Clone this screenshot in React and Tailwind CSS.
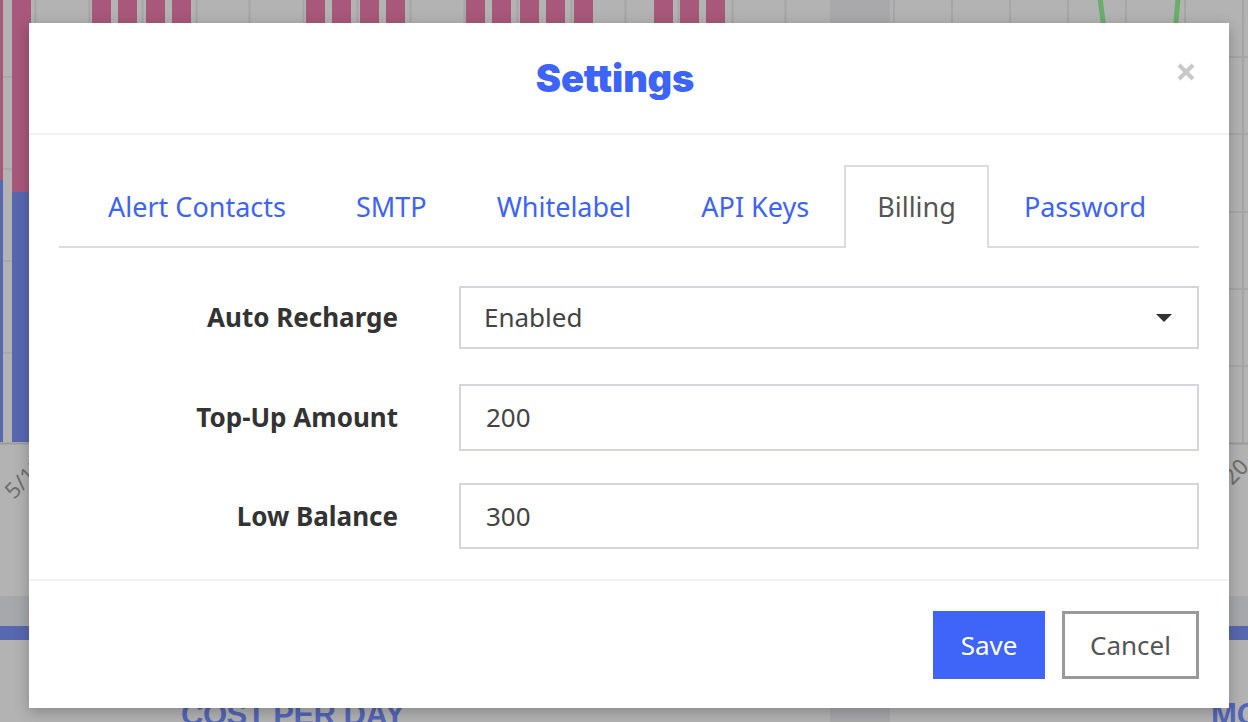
const tabs = ["Alert Contacts", "SMTP", "Whitelabel", "API Keys", "Billing", "Password"];

const pinkBars = [92, 118, 146, 172, 306, 332, 360, 386, 466, 492, 520, 546, 574, 654, 680, 706];

function BackgroundChart() {
  const leftGrid = [];
  for (let i = 0; i < 15; i++) leftGrid.push(Math.round(35 + 53.6 * i));
  const rightGrid = [894, 952, 1010, 1068, 1126, 1185, 1243];
  return (
    <svg className="absolute inset-0" width="1248" height="722" viewBox="0 0 1248 722">
      {leftGrid.map((x) => (
        <line key={x} x1={x + 0.5} y1="0" x2={x + 0.5} y2="443" stroke="#a6a6a6" strokeWidth="2" />
      ))}
      {[77, 169, 261, 353].map((y) => (
        <line key={y} x1="0" y1={y} x2="830" y2={y} stroke="#a6a6a6" strokeWidth="1.5" />
      ))}
      <rect x="830" y="0" width="60" height="722" fill="#a9a9ab" />
      {rightGrid.map((x) => (
        <line key={x} x1={x} y1="0" x2={x} y2="444" stroke="#a6a6a6" strokeWidth="2" />
      ))}
      {[57, 134, 212, 289, 366].map((y) => (
        <line key={y} x1="890" y1={y} x2="1248" y2={y} stroke="#a3a3a3" strokeWidth="1.5" />
      ))}
      <line x1="0" y1="443.5" x2="1248" y2="443.5" stroke="#9c9c9c" strokeWidth="2" />
      <rect x="0" y="0" width="3" height="180" fill="#a8587a" />
      <rect x="0" y="180" width="3" height="262" fill="#5868b0" />
      <rect x="12" y="0" width="19" height="192" fill="#a8587a" />
      <rect x="12" y="192" width="19" height="250" fill="#5868b0" />
      {pinkBars.map((x) => (
        <rect key={x} x={x} y="0" width="19" height="300" fill="#a8587a" />
      ))}
      <line x1="1100" y1="-2" x2="1108" y2="60" stroke="#6aae6c" strokeWidth="5" />
      <line x1="1178" y1="-2" x2="1173" y2="60" stroke="#6aae6c" strokeWidth="5" />
      <text x="14" y="500" transform="rotate(-45 14 500)" fill="#6e6e6e" fontSize="22" fontFamily="Noto Sans, sans-serif">5/15</text>
      <text x="1232" y="486" transform="rotate(-45 1232 486)" fill="#6e6e6e" fontSize="22" fontFamily="Noto Sans, sans-serif">20</text>
      <rect x="0" y="596" width="1248" height="30" fill="#a7a8ab" />
      <rect x="0" y="626" width="1248" height="14" fill="#5868b0" />
    </svg>
  );
}

function CloseIcon() {
  return (
    <svg width="20" height="20" viewBox="0 0 20 20">
      <path d="M3 3 L17 17 M17 3 L3 17" stroke="#c9c9c9" strokeWidth="4.2" />
    </svg>
  );
}

export default function App() {
  return (
    <div
      className="relative h-[722px] w-[1248px] overflow-hidden bg-[#b3b3b3]"
      style={{ fontFamily: '"Noto Sans", sans-serif' }}
    >
      <BackgroundChart />
      <div className="absolute left-[181px] top-[692px] text-[31px] font-black tracking-[-0.5px] text-[#5366b8] [font-family:'Liberation_Sans',sans-serif]">
        COST PER DAY
      </div>
      <div className="absolute left-[1211px] top-[692px] text-[31px] font-black text-[#5366b8] [font-family:'Liberation_Sans',sans-serif]">
        MO
      </div>

      <div className="absolute inset-0 pl-[29px] pt-[23px]">
        <div className="flex h-[685px] w-[1200px] flex-col bg-white shadow-[0_4px_14px_rgba(0,0,0,0.25)]">
          <div className="relative flex h-[112px] items-center justify-center border-b-2 border-[#f2f2f2] pr-[28px]">
            <h2 className="text-[38px] font-black tracking-[-0.2px] text-[#3d63f7] [font-family:Inter,sans-serif]">
              Settings
            </h2>
            <button type="button" className="absolute right-[33px] top-[39px]">
              <CloseIcon />
            </button>
          </div>

          <div className="flex h-[444px] flex-col px-[30px]">
            <div className="mt-[30px] flex justify-center border-b-2 border-[#dddddd] pr-[4px]">
              {tabs.map((tab) =>
                tab === "Billing" ? (
                  <div
                    key={tab}
                    className="-mb-[2px] flex h-[83px] items-center border-2 border-b-0 border-[#dddddd] bg-white px-[31px] text-[27px] text-[#555555]"
                  >
                    {tab}
                  </div>
                ) : (
                  <div
                    key={tab}
                    className="-mb-[2px] flex h-[83px] items-center border-2 border-b-0 border-transparent px-[33px] text-[27px] text-[#3d63f7]"
                  >
                    {tab}
                  </div>
                )
              )}
            </div>

            <div className="mt-[38px] grid grid-cols-[339px_1fr] items-center gap-x-[61px]">
              <label className="text-right text-[26px] font-bold text-[#333333]">Auto Recharge</label>
              <div className="relative flex h-[63px] items-center border-2 border-[#d4d6dc] pl-[23px] text-[26px] text-[#444444]">
                Enabled
                <span className="absolute right-[25px] top-[26px] h-0 w-0 border-x-[8px] border-t-[8px] border-x-transparent border-t-[#333333]" />
              </div>

              <label className="mt-[35px] text-right text-[26px] font-bold text-[#333333]">Top-Up Amount</label>
              <div className="mt-[35px] flex h-[67px] items-center border-2 border-[#d4d6dc] pl-[25px] text-[26px] text-[#444444]">
                200
              </div>

              <label className="mt-[32px] text-right text-[26px] font-bold text-[#333333]">Low Balance</label>
              <div className="mt-[32px] flex h-[66px] items-center border-2 border-[#d4d6dc] pl-[25px] text-[26px] text-[#444444]">
                300
              </div>
            </div>
          </div>

          <div className="flex flex-1 items-start justify-end gap-[17px] border-t-2 border-[#f2f2f2] pr-[30px] pt-[30px]">
            <button type="button" className="h-[68px] w-[112px] bg-[#3e64f8] text-[26px] text-white">
              Save
            </button>
            <button
              type="button"
              className="h-[68px] w-[137px] border-[3px] border-[#9a9a9a] bg-white text-[26px] text-[#555555]"
            >
              Cancel
            </button>
          </div>
        </div>
      </div>
    </div>
  );
}
